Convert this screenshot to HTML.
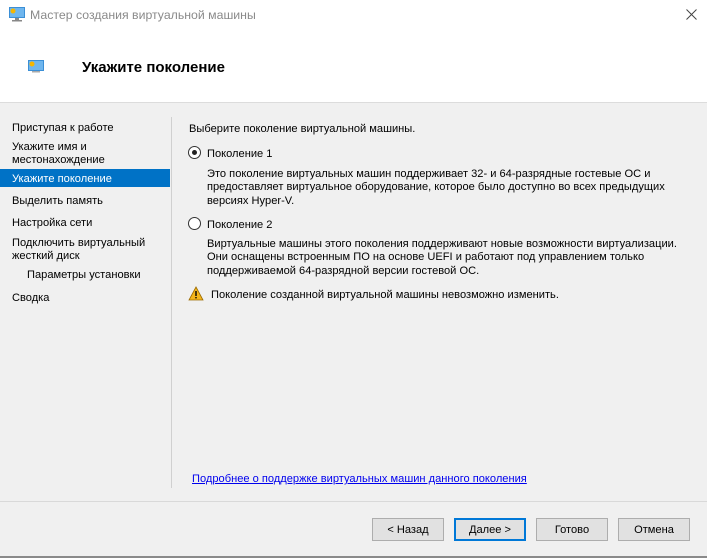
<!DOCTYPE html>
<html><head><meta charset="utf-8"><style>
*{margin:0;padding:0;box-sizing:border-box}
body{width:707px;height:558px;background:#f0f0f0;font-family:"Liberation Sans",sans-serif;font-size:11.1px;color:#000;position:relative;overflow:hidden}
.a{position:absolute;white-space:nowrap}
.title{top:0;left:0;width:707px;height:32px;background:#fff}
.hdr{top:32px;left:0;width:707px;height:71px;background:#fff;border-bottom:1px solid #dcdcdc}
.btn{position:absolute;top:518px;width:72px;height:23px;background:#e1e1e1;border:1px solid #adadad;text-align:center;line-height:22px}
.nav{left:12px}
.rad{position:absolute;width:13px;height:13px;border:1px solid #333;border-radius:50%;background:#fff}
</style></head><body>
<div class="a title"></div>
<svg class="a" style="left:8px;top:6px" width="18" height="16" viewBox="0 0 18 16"><rect x="1" y="1" width="16" height="11" fill="#3b8fd6"/><rect x="2" y="2" width="14" height="9" fill="#6fb6ee"/><circle cx="5" cy="5" r="2.5" fill="#f6b600"/><rect x="7" y="12" width="4" height="2" fill="#888"/><rect x="4" y="14" width="10" height="1.5" fill="#888"/></svg>
<div class="a" style="left:30px;top:8px;font-size:12.3px;color:#8a8a8a">Мастер создания виртуальной машины</div>
<svg class="a" style="left:686px;top:9px" width="11" height="11" viewBox="0 0 11 11"><path d="M0.5 0.5 L10.5 10.5 M10.5 0.5 L0.5 10.5" stroke="#444" stroke-width="1"/></svg>
<div class="a hdr"></div>
<svg class="a" style="left:27px;top:59px" width="18" height="16" viewBox="0 0 18 16"><rect x="1" y="1" width="16" height="11" fill="#3b8fd6"/><rect x="2" y="2" width="14" height="9" fill="#6fb6ee"/><circle cx="5" cy="5" r="2.5" fill="#f6b600"/><rect x="5" y="12" width="8" height="1.5" fill="#aaa"/></svg>
<div class="a" style="left:82px;top:59px;font-size:15px;font-weight:bold">Укажите поколение</div>

<div class="a" style="left:171px;top:117px;width:1px;height:371px;background:#d0d0d0"></div>
<div class="a nav" style="top:122px">Приступая к работе</div>
<div class="a nav" style="top:141px;line-height:13px">Укажите имя и<br>местонахождение</div>
<div class="a" style="left:0;top:169px;width:170px;height:18px;background:#0072c6"></div>
<div class="a nav" style="top:173px;color:#fff">Укажите поколение</div>
<div class="a nav" style="top:195px">Выделить память</div>
<div class="a nav" style="top:217px">Настройка сети</div>
<div class="a nav" style="top:237px;line-height:13px">Подключить виртуальный<br>жесткий диск</div>
<div class="a" style="left:27px;top:269px">Параметры установки</div>
<div class="a nav" style="top:292px">Сводка</div>

<div class="a" style="left:189px;top:123px">Выберите поколение виртуальной машины.</div>
<div class="rad" style="left:188px;top:146px"><div style="position:absolute;left:3px;top:3px;width:5px;height:5px;border-radius:50%;background:#222"></div></div>
<div class="a" style="left:207px;top:148px">Поколение 1</div>
<div class="a" style="left:207px;top:168px;line-height:13.3px">Это поколение виртуальных машин поддерживает 32- и 64-разрядные гостевые ОС и<br>предоставляет виртуальное оборудование, которое было доступно во всех предыдущих<br>версиях Hyper-V.</div>
<div class="rad" style="left:188px;top:217px"></div>
<div class="a" style="left:207px;top:219px">Поколение 2</div>
<div class="a" style="left:207px;top:238px;line-height:13.3px">Виртуальные машины этого поколения поддерживают новые возможности виртуализации.<br>Они оснащены встроенным ПО на основе UEFI и работают под управлением только<br>поддерживаемой 64-разрядной версии гостевой ОС.</div>
<svg class="a" style="left:188px;top:286px" width="16" height="15" viewBox="0 0 16 15"><path d="M8 1 L15 14 L1 14 Z" fill="#f3b51c" stroke="#9a6a00" stroke-width="0.8"/><rect x="7.3" y="5" width="1.4" height="5" fill="#000"/><rect x="7.3" y="11" width="1.4" height="1.4" fill="#000"/></svg>
<div class="a" style="left:211px;top:289px">Поколение созданной виртуальной машины невозможно изменить.</div>
<div class="a" style="left:192px;top:473px;color:#0000ee;text-decoration:underline">Подробнее о поддержке виртуальных машин данного поколения</div>

<div class="a" style="left:0;top:501px;width:707px;height:1px;background:#d9d9d9"></div>
<div class="btn" style="left:372px">&lt; Назад</div>
<div class="btn" style="left:454px;border:2px solid #0078d7;line-height:20px">Далее &gt;</div>
<div class="btn" style="left:536px">Готово</div>
<div class="btn" style="left:618px">Отмена</div>
<div class="a" style="left:0;top:556px;width:707px;height:2px;background:#8a8a8a"></div>
</body></html>
